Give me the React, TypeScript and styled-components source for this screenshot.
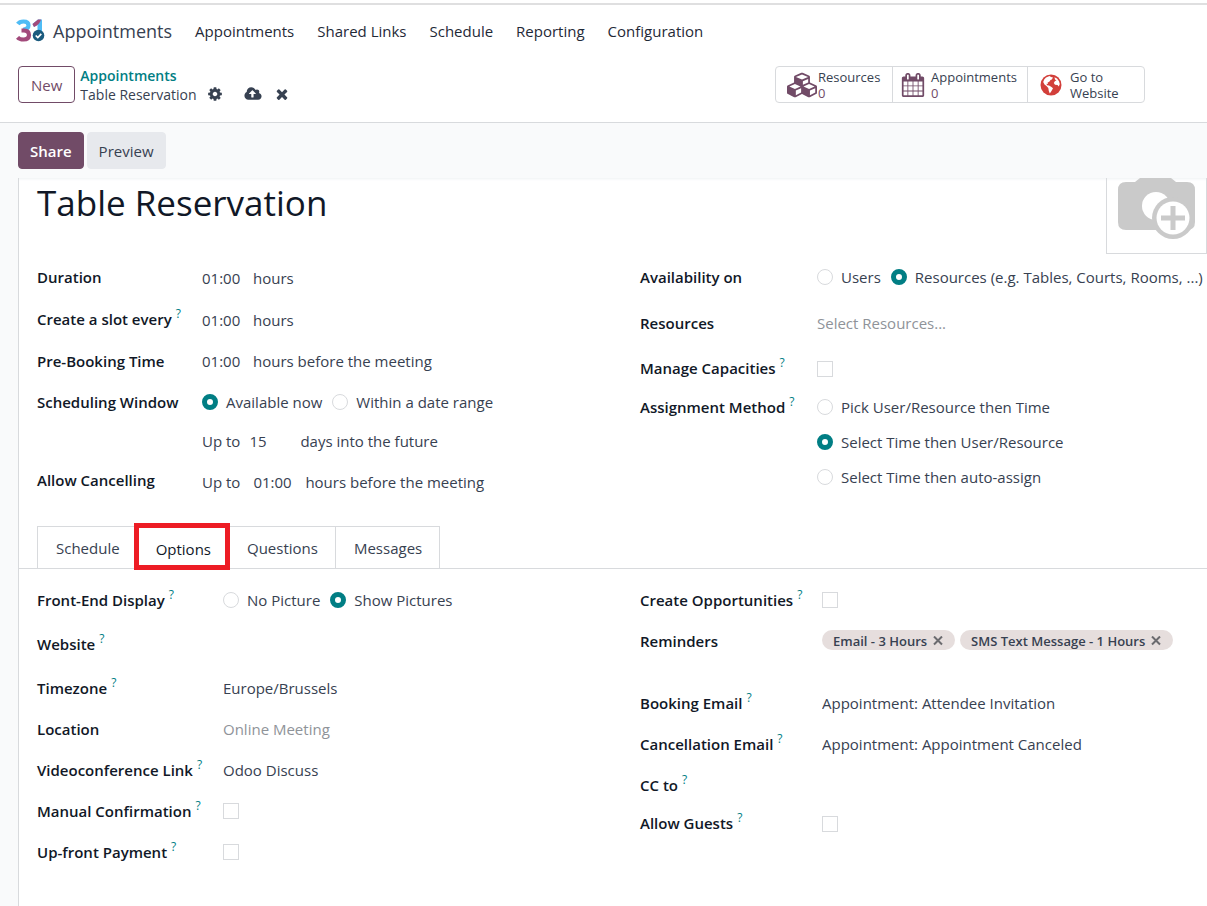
import React from "react";
import styled, { createGlobalStyle } from "styled-components";

const GlobalStyle = createGlobalStyle`
  *, *::before, *::after { box-sizing: border-box; }
  body { margin: 0; background: #fff; color: #374151; font-family: "Open Sans", "Noto Sans", sans-serif; font-size: 15px; line-height: 20px; }
  button, input { font: inherit; color: inherit; margin: 0; }
`;

const Page = styled.div`
  display: flex;
  flex-direction: column;
  min-height: 100vh;
`;

const Navbar = styled.header`
  display: flex;
  align-items: center;
  height: 54px;
  margin-top: 3px;
  padding: 0 16px;
  border-top: 2px solid #dfdfe0;
`;

const Brand = styled.a`
  display: flex;
  align-items: center;
  gap: 8px;
  margin-right: 23px;
  color: #374151;
  font-size: 18px;
  line-height: 24px;
  text-decoration: none;
`;

const Menu = styled.nav`
  display: flex;
  gap: 23px;
`;

const MenuLink = styled.a`
  color: #1f2937;
  text-decoration: none;
`;

const ControlPanel = styled.div`
  display: flex;
  align-items: center;
  justify-content: space-between;
  height: 66px;
  padding: 0 62px 10px 18px;
  border-bottom: 1px solid #d8dadd;
`;

const Group = styled.div<{ $gap: number }>`
  display: flex;
  align-items: center;
  gap: ${(p) => p.$gap}px;
`;

const Button = styled.button<{ $kind: "outline" | "primary" | "secondary" }>`
  height: 37px;
  padding: 0 ${(p) => (p.$kind === "outline" ? 12 : 11)}px;
  border: 1px solid ${(p) => (p.$kind === "secondary" ? "#e7e9ed" : "#714b67")};
  border-radius: 4px;
  background: ${(p) => ({ outline: "#fff", primary: "#714b67", secondary: "#e7e9ed" })[p.$kind]};
  color: ${(p) => ({ outline: "#714b67", primary: "#fff", secondary: "#374151" })[p.$kind]};
  font-weight: ${(p) => (p.$kind === "primary" ? 600 : 500)};
`;

const Breadcrumb = styled.div`
  display: flex;
  flex-direction: column;
  font-size: 14px;
  line-height: 19px;
`;

const CrumbLink = styled.a`
  color: #017e84;
  font-weight: 600;
  text-decoration: none;
`;

const CrumbRow = styled.div`
  display: flex;
  align-items: center;
`;

const IconButton = styled.button<{ $space: number }>`
  display: flex;
  margin-left: ${(p) => p.$space}px;
  padding: 0;
  border: 0;
  background: none;
  color: #374151;
`;

const StatBox = styled.div`
  display: flex;
  height: 37px;
  border: 1px solid #d8dadd;
  border-radius: 4px;
`;

const StatButton = styled.button<{ $width: number; $pad: number; $gap: number }>`
  display: flex;
  align-items: center;
  gap: ${(p) => p.$gap}px;
  width: ${(p) => p.$width}px;
  padding: 0 0 0 ${(p) => p.$pad}px;
  border: 0;
  background: none;
  font-size: 13px;
  line-height: 16px;
  text-align: left;
  white-space: nowrap;
  & + & { border-left: 1px solid #d8dadd; }
  > svg { color: #714b67; }
`;

const StatText = styled.span`
  display: flex;
  flex-direction: column;
`;

const StatValue = styled.span`
  color: #714b67;
  font-weight: 500;
`;

const FormView = styled.main`
  display: flex;
  flex: 1;
  flex-direction: column;
  padding-left: 18px;
  background: #f9fafb;
`;

const StatusBar = styled.div`
  display: flex;
  gap: 3px;
  padding: 9px 0;
`;

const Sheet = styled.section`
  flex: 1;
  border-left: 1px solid #d8dadd;
  background: #fff;
  box-shadow: inset 0 4px 3px -3px #eff1f3;
`;

const SheetHead = styled.div`
  display: flex;
  justify-content: space-between;
  height: 78px;
  padding-left: 18px;
`;

const Title = styled.h1`
  margin: 0;
  color: #111827;
  font-size: 35px;
  font-weight: 400;
  line-height: 50px;
`;

const Picture = styled.button`
  height: 76px;
  padding: 0;
  border: 1px solid #d8dadd;
  border-top: 0;
  background: none;
`;

const Columns = styled.div<{ $top?: number }>`
  display: grid;
  grid-template-columns: 1fr 1fr;
  column-gap: 36px;
  padding: ${(p) => p.$top ?? 0}px 0 0 18px;
`;

const Fields = styled.div<{ $label: number }>`
  display: grid;
  grid-template-columns: ${(p) => p.$label}px 1fr;
  align-content: start;
`;

const Label = styled.label<{ $h: number }>`
  display: flex;
  align-items: center;
  height: ${(p) => p.$h}px;
  color: #111827;
  font-weight: 600;
  white-space: nowrap;
`;

const Help = styled.sup`
  align-self: center;
  margin: -10px 0 0 4px;
  color: #017e84;
  font-size: 12px;
  font-weight: 500;
  line-height: 12px;
`;

const Value = styled.div<{ $h: number; $gap?: number }>`
  display: flex;
  align-items: center;
  gap: ${(p) => p.$gap ?? 0}px;
  height: ${(p) => p.$h}px;
  padding-top: 1px;
  white-space: nowrap;
`;

const TagList = styled.div`
  display: flex;
  align-items: flex-start;
  gap: 5px;
  height: 61px;
  padding-top: 9px;
  white-space: nowrap;
`;

const TextInput = styled.input<{ $width?: number }>`
  width: ${(p) => (p.$width ? `${p.$width}px` : "100%")};
  height: 26px;
  padding: 0;
  border: 0;
  outline: 0;
  background: none;
  &::placeholder { color: #8f9399; opacity: 1; }
`;

const Choices = styled.div<{ $column?: boolean }>`
  display: flex;
  flex-direction: ${(p) => (p.$column ? "column" : "row")};
  gap: ${(p) => (p.$column ? 0 : 10)}px;
`;

const Choice = styled.label<{ $h: number }>`
  display: flex;
  align-items: center;
  gap: 8px;
  height: ${(p) => p.$h}px;
  white-space: nowrap;
`;

const Radio = styled.input.attrs({ type: "radio" })`
  appearance: none;
  width: 16px;
  height: 16px;
  border: 1px solid #d8dadd;
  border-radius: 50%;
  background: #fff;
  &:checked { border: 5px solid #017e84; }
`;

const Checkbox = styled.input.attrs({ type: "checkbox" })`
  appearance: none;
  width: 16px;
  height: 16px;
  border: 1px solid #d8dadd;
  background: #fff;
`;

const Tabs = styled.div`
  display: flex;
  height: 43px;
  margin-top: 22px;
  padding-left: 18px;
  border-bottom: 1px solid #d8dadd;
`;

const Tab = styled.button<{ $active?: boolean }>`
  position: relative;
  z-index: ${(p) => (p.$active ? 1 : 0)};
  height: ${(p) => (p.$active ? 43 : 42)}px;
  padding: 1px 17px 0 18px;
  border: 1px solid #d8dadd;
  border-bottom: 0;
  background: #fff;
  color: ${(p) => (p.$active ? "#111827" : "#374151")};
  & + & { margin-left: -1px; }
`;

const Highlight = styled.span`
  position: absolute;
  inset: -4px -2px -1px -4px;
  border: 5px solid #ed1c24;
`;

const Tag = styled.span`
  display: flex;
  align-items: center;
  gap: 6px;
  height: 20px;
  padding: 2px 12px 0 11px;
  border-radius: 10px;
  background: #e6dedd;
  font-size: 13px;
  font-weight: 600;
`;

const TagClose = styled.button`
  display: flex;
  padding: 0;
  border: 0;
  background: none;
  color: #6b6b6f;
`;

const COG =
  "M1152 896q0-106-75-181t-181-75-181 75-75 181 75 181 181 75 181-75 75-181zm512-109v222q0 12-8 23t-20 13l-185 28q-19 54-39 91 35 50 107 138 10 12 10 25t-9 23q-27 37-99 108t-94 71q-12 0-26-9l-138-108q-44 23-91 38-16 136-29 186-7 28-36 28h-222q-14 0-24.5-8.5t-11.5-21.5l-28-184q-49-16-90-37l-141 107q-10 9-25 9-14 0-25-11-126-114-165-168-7-10-7-23 0-12 8-23 15-21 51-66.5t54-70.5q-27-50-41-99l-183-27q-13-2-21-12.5t-8-23.5v-222q0-12 8-23t19-13l186-28q14-46 39-92-40-57-107-138-10-12-10-24 0-10 9-23 26-36 98.5-107.5t94.5-71.5q13 0 26 10l138 107q44-23 91-38 16-136 29-186 7-28 36-28h222q14 0 24.5 8.5t11.5 21.5l28 184q49 16 90 37l142-107q9-9 24-9 13 0 25 10 129 119 165 170 7 8 7 22 0 12-8 23-15 21-51 66.5t-54 70.5q26 50 41 98l183 28q13 2 21 12.5t8 23.5z";
const TIMES =
  "M1490 1322q0 40-28 68l-136 136q-28 28-68 28t-68-28l-294-294-294 294q-28 28-68 28t-68-28l-136-136q-28-28-28-68t28-68l294-294-294-294q-28-28-28-68t28-68l136-136q28-28 68-28t68 28l294 294 294-294q28-28 68-28t68 28l136 136q28 28 28 68t-28 68l-294 294 294 294q28 28 28 68z";
const CLOUD =
  "M1216 864q0-14-9-23l-352-352q-9-9-23-9t-23 9l-351 351q-10 12-10 24 0 14 9 23t23 9h224v352q0 13 9.5 22.5t22.5 9.5h192q13 0 22.5-9.5t9.5-22.5v-352h224q13 0 22.5-9.5t9.5-22.5zm640 288q0 159-112.5 271.5t-271.5 112.5h-1088q-185 0-316.5-131.5t-131.5-316.5q0-130 70-240t188-165q-2-30-2-43 0-212 150-362t362-150q156 0 285.5 87t188.5 231q71-62 166-62 106 0 181 75t75 181q0 76-41 138 130 31 213.5 135.5t83.5 238.5z";
const CUBES =
  "M640 1632l384-192v-314l-384 164v342zm-64-454l404-173-404-173-404 173zm1088 454l384-192v-314l-384 164v342zm-64-454l404-173-404-173-404 173zm-448-293l384-165v-266l-384 164v267zm-64-379l441-189-441-189-441 189zm1088 518v416q0 36-19 67t-52 47l-448 224q-25 14-57 14t-57-14l-448-224q-4-2-7-4-2 2-7 4l-448 224q-25 14-57 14t-57-14l-448-224q-33-16-52-47t-19-67v-416q0-38 21.5-70t56.5-48l434-186v-400q0-38 21.5-70t56.5-48l448-192q23-10 50-10t50 10l448 192q35 16 56.5 48t21.5 70v400l434 186q36 16 57 48t21 70z";
const CALENDAR =
  "M192 1664h288v-288h-288v288zm352 0h320v-288h-320v288zm-352-352h288v-320h-288v320zm352 0h320v-320h-320v320zm-352-384h288v-288h-288v288zm736 736h320v-288h-320v288zm-384-736h320v-288h-320v288zm768 736h288v-288h-288v288zm-384-352h320v-320h-320v320zm-352-864v-288q0-13-9.5-22.5t-22.5-9.5h-64q-13 0-22.5 9.5t-9.5 22.5v288q0 13 9.5 22.5t22.5 9.5h64q13 0 22.5-9.5t9.5-22.5zm736 864h288v-320h-288v320zm-384-384h320v-288h-320v288zm384 0h288v-288h-288v288zm32-480v-288q0-13-9.5-22.5t-22.5-9.5h-64q-13 0-22.5 9.5t-9.5 22.5v288q0 13 9.5 22.5t22.5 9.5h64q13 0 22.5-9.5t9.5-22.5zm384-64v1280q0 52-38 90t-90 38h-1408q-52 0-90-38t-38-90v-1280q0-52 38-90t90-38h128v-96q0-66 47-113t113-47h64q66 0 113 47t47 113v96h384v-96q0-66 47-113t113-47h64q66 0 113 47t47 113v96h128q52 0 90 38t38 90z";

function Icon({ d, box = "0 0 1792 1792", w, h }: { d: string; box?: string; w: number; h: number }) {
  return (
    <svg width={w} height={h} viewBox={box} fill="currentColor" aria-hidden="true">
      <path d={d} />
    </svg>
  );
}

function Logo() {
  return (
    <svg width="29" height="24" viewBox="0 0 29 24" fill="none" aria-hidden="true">
      <path d="M1.800 5 Q3.500 2.500 7.500 2.500 Q12.500 2.500 12.500 6.300 Q12.500 10.200 7 10.800" stroke="#4fbcf5" strokeWidth="4.200" />
      <path d="M5.500 11.500 H8 Q13 11.800 13 16 Q13 20.500 7.500 20.500 Q3.500 20.500 1.500 18.300" stroke="#a24a7b" strokeWidth="4.200" />
      <path d="M16.500 5 L22 0.500 H26 V12 H21.500 V5.500 L18 8 Z" fill="#4fbcf5" />
      <path d="M16.500 5 L22 0.500 H25 Q23.500 6 18 8 Z" fill="#a24a7b" />
      <circle cx="22.500" cy="16.500" r="5.800" fill="#1b5b7e" />
      <path d="M19.700 16.500 L21.800 18.500 L25.300 14.900" stroke="#fff" strokeWidth="1.700" />
    </svg>
  );
}

function Globe() {
  return (
    <svg width="22" height="22" viewBox="0 0 22 22" aria-hidden="true">
      <circle cx="11" cy="11" r="10.500" fill="#d23f3a" />
      <path d="M6 3.500 L9.500 2 L11 3 L13 3.500 L11.800 5.500 L10.500 6 L9.500 7.500 L7.500 8.700 L8 10 L6.500 9.800 L7 11.300 L9 11.500 L11.500 13 L13 14.200 L11.500 17 L9.800 19.500 L8.800 17 L8.300 14 L6.500 12 L4.500 10.500 L3.200 8 L4.200 5.500 Z" fill="#fff" />
      <path d="M14.500 3.300 L17 4.500 L19 7.300 L19.800 10 L18.800 12.500 L17.500 11 L15 10.800 L13.800 9 L15 7 L16.500 6.500 L15 5.500 Z" fill="#fff" />
    </svg>
  );
}

function Camera() {
  return (
    <svg width="99" height="75" viewBox="0 0 99 75" aria-hidden="true">
      <path d="M18 4 H28 L33 0 H64 L69 4 H80 Q88 4 88 12 V44 Q88 52 80 52 H19 Q11 52 11 44 V12 Q11 4 19 4 Z" fill="#cacaca" />
      <circle cx="49" cy="28" r="14" fill="#fff" />
      <circle cx="66" cy="40" r="21" fill="#cacaca" />
      <circle cx="66" cy="40" r="16.500" fill="#fff" />
      <path d="M63.500 28 H68.500 V37.500 H78 V42.500 H68.500 V52 H63.500 V42.500 H54 V37.500 H63.500 Z" fill="#cacaca" />
    </svg>
  );
}

function FieldLabel({ h, help, id, children }: { h: number; help?: boolean; id?: string; children: React.ReactNode }) {
  return (
    <Label $h={h} htmlFor={id}>
      {children}
      {help && <Help>?</Help>}
    </Label>
  );
}

function RadioChoice({ name, h, checked, children }: { name: string; h: number; checked?: boolean; children: React.ReactNode }) {
  return (
    <Choice $h={h}>
      <Radio name={name} defaultChecked={checked} />
      {children}
    </Choice>
  );
}

function MainFields() {
  return (
    <Columns>
      <Fields $label={165}>
        <FieldLabel h={42} id="duration">Duration</FieldLabel>
        <Value $h={42}><TextInput id="duration" $width={51} defaultValue="01:00" />hours</Value>
        <FieldLabel h={42} id="slot" help>Create a slot every</FieldLabel>
        <Value $h={42}><TextInput id="slot" $width={51} defaultValue="01:00" />hours</Value>
        <FieldLabel h={41} id="prebook">Pre-Booking Time</FieldLabel>
        <Value $h={41}><TextInput id="prebook" $width={51} defaultValue="01:00" />hours before the meeting</Value>
        <FieldLabel h={41}>Scheduling Window</FieldLabel>
        <Choices>
          <RadioChoice name="window" h={41} checked>Available now</RadioChoice>
          <RadioChoice name="window" h={41}>Within a date range</RadioChoice>
        </Choices>
        <span />
        <Value $h={36} $gap={9}>Up to<TextInput aria-label="Days" $width={42} defaultValue="15" />days into the future</Value>
        <FieldLabel h={44} id="cancel">Allow Cancelling</FieldLabel>
        <Value $h={46} $gap={13}>Up to<TextInput id="cancel" $width={39} defaultValue="01:00" />hours before the meeting</Value>
      </Fields>
      <Fields $label={177}>
        <FieldLabel h={42}>Availability on</FieldLabel>
        <Choices>
          <RadioChoice name="availability" h={42}>Users</RadioChoice>
          <RadioChoice name="availability" h={42} checked>Resources (e.g. Tables, Courts, Rooms, ...)</RadioChoice>
        </Choices>
        <FieldLabel h={49} id="resources">Resources</FieldLabel>
        <Value $h={49}><TextInput id="resources" placeholder="Select Resources..." /></Value>
        <FieldLabel h={42} id="capacities" help>Manage Capacities</FieldLabel>
        <Value $h={42}><Checkbox id="capacities" /></Value>
        <FieldLabel h={35} help>Assignment Method</FieldLabel>
        <Choices $column>
          <RadioChoice name="method" h={35}>Pick User/Resource then Time</RadioChoice>
          <RadioChoice name="method" h={35} checked>Select Time then User/Resource</RadioChoice>
          <RadioChoice name="method" h={35}>Select Time then auto-assign</RadioChoice>
        </Choices>
      </Fields>
    </Columns>
  );
}

function ReminderTag({ children }: { children: string }) {
  return (
    <Tag>
      {children}
      <TagClose aria-label={`Remove ${children}`}>
        <svg width="10" height="10" viewBox="0 0 10 10" fill="none" stroke="currentColor" strokeWidth="2" aria-hidden="true">
          <path d="M1 0.500 L9 8.500 M9 0.500 L1 8.500" />
        </svg>
      </TagClose>
    </Tag>
  );
}

function OptionFields() {
  return (
    <Columns $top={9}>
      <Fields $label={186}>
        <FieldLabel h={43} help>Front-End Display</FieldLabel>
        <Choices>
          <RadioChoice name="display" h={43}>No Picture</RadioChoice>
          <RadioChoice name="display" h={43} checked>Show Pictures</RadioChoice>
        </Choices>
        <FieldLabel h={46} id="website" help>Website</FieldLabel>
        <Value $h={46}><TextInput id="website" /></Value>
        <FieldLabel h={41} id="timezone" help>Timezone</FieldLabel>
        <Value $h={41}><TextInput id="timezone" defaultValue="Europe/Brussels" /></Value>
        <FieldLabel h={41} id="location">Location</FieldLabel>
        <Value $h={41}><TextInput id="location" placeholder="Online Meeting" /></Value>
        <FieldLabel h={41} id="video" help>Videoconference Link</FieldLabel>
        <Value $h={41}><TextInput id="video" defaultValue="Odoo Discuss" /></Value>
        <FieldLabel h={41} id="manual" help>Manual Confirmation</FieldLabel>
        <Value $h={41}><Checkbox id="manual" /></Value>
        <FieldLabel h={41} id="payment" help>Up-front Payment</FieldLabel>
        <Value $h={41}><Checkbox id="payment" /></Value>
      </Fields>
      <Fields $label={182}>
        <FieldLabel h={43} id="opportunities" help>Create Opportunities</FieldLabel>
        <Value $h={43}><Checkbox id="opportunities" /></Value>
        <FieldLabel h={40}>Reminders</FieldLabel>
        <TagList>
          <ReminderTag>Email - 3 Hours</ReminderTag>
          <ReminderTag>SMS Text Message - 1 Hours</ReminderTag>
        </TagList>
        <FieldLabel h={41} id="booking" help>Booking Email</FieldLabel>
        <Value $h={41}><TextInput id="booking" defaultValue="Appointment: Attendee Invitation" /></Value>
        <FieldLabel h={41} id="cancellation" help>Cancellation Email</FieldLabel>
        <Value $h={41}><TextInput id="cancellation" defaultValue="Appointment: Appointment Canceled" /></Value>
        <FieldLabel h={41} id="cc" help>CC to</FieldLabel>
        <Value $h={41}><TextInput id="cc" /></Value>
        <FieldLabel h={36} id="guests" help>Allow Guests</FieldLabel>
        <Value $h={36}><Checkbox id="guests" /></Value>
      </Fields>
    </Columns>
  );
}

export default function App() {
  return (
    <Page>
      <GlobalStyle />
      <Navbar>
        <Brand href="#"><Logo />Appointments</Brand>
        <Menu>
          {["Appointments", "Shared Links", "Schedule", "Reporting", "Configuration"].map((item) => (
            <MenuLink key={item} href="#">{item}</MenuLink>
          ))}
        </Menu>
      </Navbar>
      <ControlPanel>
        <Group $gap={5}>
          <Button $kind="outline">New</Button>
          <Breadcrumb>
            <CrumbLink href="#">Appointments</CrumbLink>
            <CrumbRow>
              Table Reservation
              <IconButton $space={10} aria-label="Actions"><Icon d={COG} w={16} h={16} /></IconButton>
              <IconButton $space={21} aria-label="Save"><Icon d={CLOUD} box="-64 0 1920 1792" w={18} h={16} /></IconButton>
              <IconButton $space={12} aria-label="Discard"><Icon d={TIMES} w={16} h={16} /></IconButton>
            </CrumbRow>
          </Breadcrumb>
        </Group>
        <StatBox>
          <StatButton $width={116} $pad={11} $gap={1}>
            <Icon d={CUBES} box="0 0 2176 1792" w={30} h={26} />
            <StatText>Resources<StatValue>0</StatValue></StatText>
          </StatButton>
          <StatButton $width={135} $pad={8} $gap={6}>
            <Icon d={CALENDAR} w={24} h={26} />
            <StatText>Appointments<StatValue>0</StatValue></StatText>
          </StatButton>
          <StatButton $width={117} $pad={12} $gap={8}>
            <Globe />
            <StatText><span>Go to</span><span>Website</span></StatText>
          </StatButton>
        </StatBox>
      </ControlPanel>
      <FormView>
        <StatusBar>
          <Button $kind="primary">Share</Button>
          <Button $kind="secondary">Preview</Button>
        </StatusBar>
        <Sheet>
          <SheetHead>
            <Title>Table Reservation</Title>
            <Picture aria-label="Upload picture"><Camera /></Picture>
          </SheetHead>
          <MainFields />
          <Tabs role="tablist">
            <Tab role="tab">Schedule</Tab>
            <Tab role="tab" aria-selected $active>Options<Highlight /></Tab>
            <Tab role="tab">Questions</Tab>
            <Tab role="tab">Messages</Tab>
          </Tabs>
          <OptionFields />
        </Sheet>
      </FormView>
    </Page>
  );
}
